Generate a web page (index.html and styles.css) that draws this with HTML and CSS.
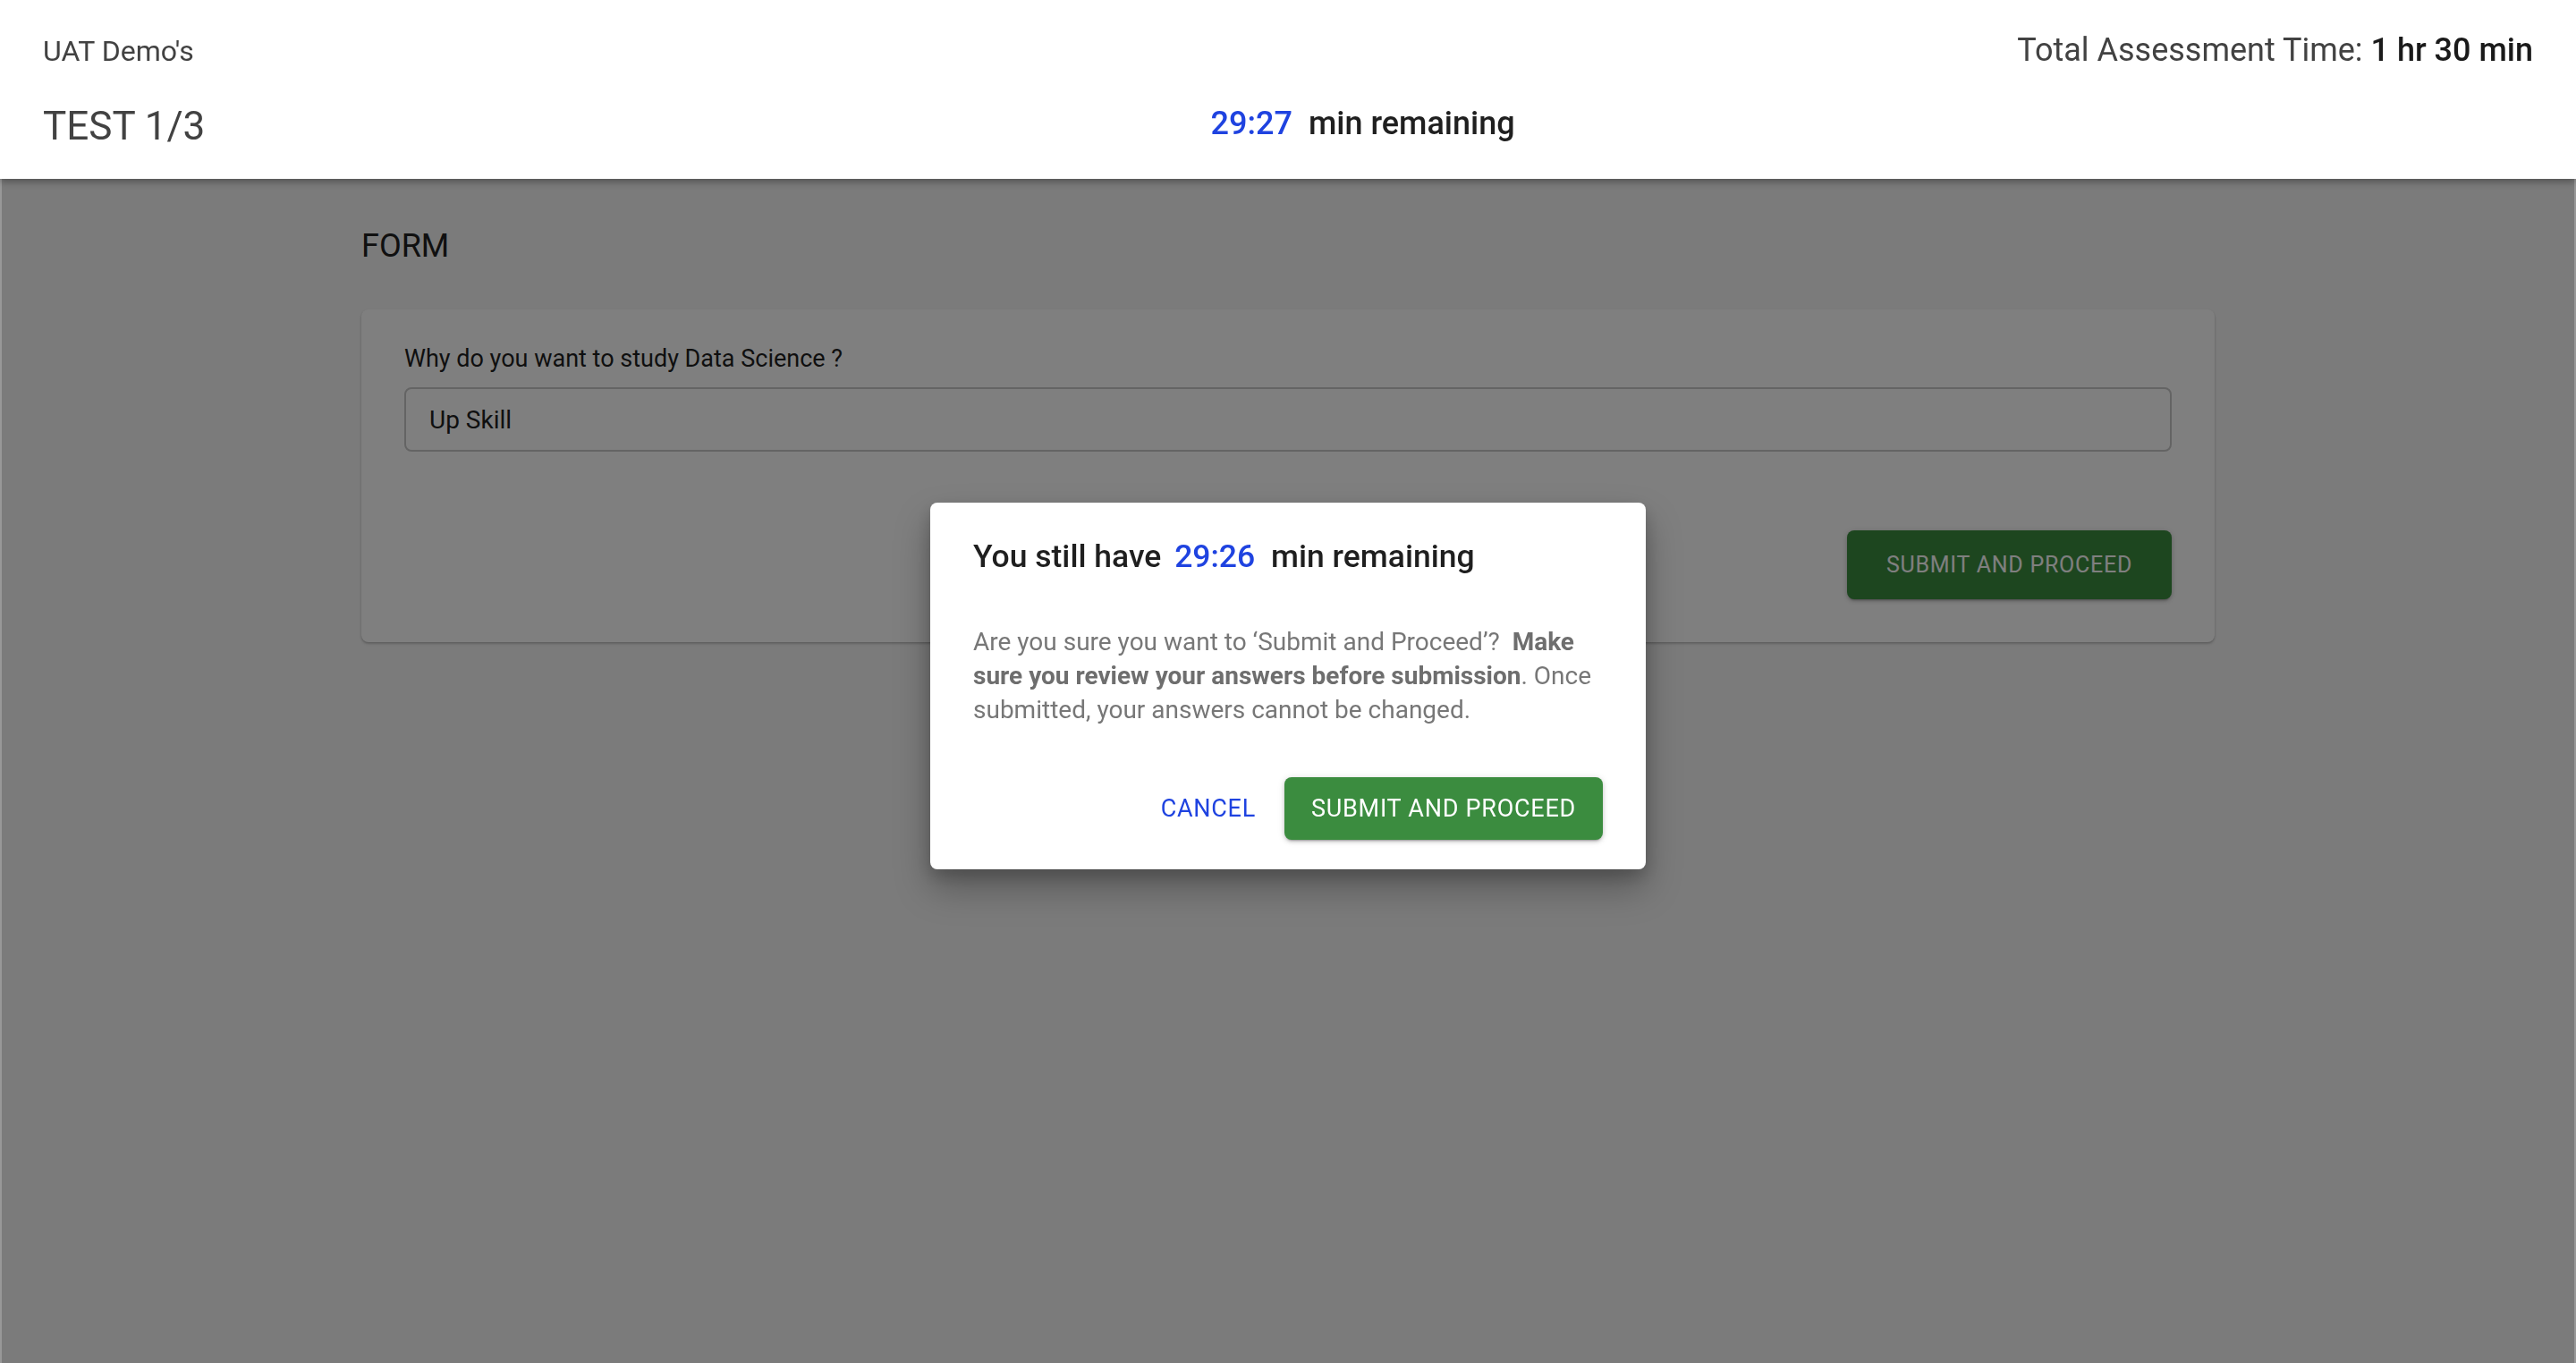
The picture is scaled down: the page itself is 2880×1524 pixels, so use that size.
FILE: index.html
```html
<!DOCTYPE html>
<html lang="en">
<head>
<meta charset="utf-8">
<title>UAT Demo's - Test 1/3</title>
<link rel="stylesheet" href="styles.css">
</head>
<body>
<header class="topbar">
  <div class="topbar-row row-one">
    <span class="org-name">UAT Demo's</span>
    <span class="total-time">Total Assessment Time: <span class="total-value">1 hr 30 min</span></span>
  </div>
  <div class="topbar-row row-two">
    <span class="test-name">TEST 1/3</span>
    <span class="timer"><span class="timer-value">29:27</span> min remaining</span>
    <span class="spacer"></span>
  </div>
</header>

<main class="content">
  <h2 class="section-title">FORM</h2>
  <section class="form-card">
    <label class="question-label" for="answer">Why do you want to study Data Science ?</label>
    <div class="answer-box" id="answer">Up Skill</div>
    <div class="card-actions">
      <button class="btn btn-primary btn-card" type="button">SUBMIT AND PROCEED</button>
    </div>
  </section>
</main>

<div class="backdrop"></div>

<div class="dialog-layer">
  <div class="dialog" role="dialog">
    <h3 class="dialog-title">You still have <span class="timer-value dialog-timer">29:26</span> min remaining</h3>
    <p class="dialog-text">Are you sure you want to ‘Submit and Proceed’?&nbsp; <strong>Make sure you review your answers before submission</strong>. Once submitted, your answers cannot be changed.</p>
    <div class="dialog-actions">
      <button class="btn btn-text" type="button">CANCEL</button>
      <button class="btn btn-primary btn-dialog" type="button">SUBMIT AND PROCEED</button>
    </div>
  </div>
</div>
</body>
</html>
```

FILE: styles.css
```css
* {
  box-sizing: border-box;
}

html, body {
  margin: 0;
  padding: 0;
}

body {
  font-family: Roboto, "Liberation Sans", Arial, sans-serif;
  background: #f6f6f6;
  color: #212121;
  min-height: 1524px;
}

/* ---------- header ---------- */
.topbar {
  position: relative;
  z-index: 30;
  height: 200px;
  background: #ffffff;
  padding: 36px 48px 35px;
  display: flex;
  flex-direction: column;
  gap: 39px;
  box-shadow: 0 3px 8px rgba(0, 0, 0, 0.35);
}

.topbar-row {
  display: flex;
  align-items: center;
  justify-content: space-between;
}

.row-one {
  height: 40px;
}

.row-two {
  height: 50px;
}

.org-name {
  font-size: 32px;
  color: #424242;
  line-height: 40px;
  margin-top: 2px;
}

.total-time {
  font-size: 36px;
  color: #424242;
  line-height: 40px;
}

.total-value {
  color: #1a1a1a;
  font-weight: 500;
}

.test-name {
  font-size: 44px;
  color: #424242;
  line-height: 50px;
  margin-top: 2px;
}

.timer {
  font-size: 36px;
  font-weight: 500;
  color: #1f1f1f;
  line-height: 50px;
  margin-top: -4px;
  margin-right: 14px;
}

.timer-value {
  color: #1f43e0;
  margin-right: 9px;
}

.spacer {
  width: 0;
}

/* ---------- main content ---------- */
.content {
  width: 2072px;
  margin: 0 auto;
  padding-top: 54px;
}

.section-title {
  margin: 0 0 50px;
  font-size: 36px;
  font-weight: 400;
  line-height: 42px;
  color: #212121;
}

.form-card {
  background: #ffffff;
  border-radius: 8px;
  padding: 40px 48px 48px;
  box-shadow: 0 2px 3px rgba(0, 0, 0, 0.18), 0 1px 2px rgba(0, 0, 0, 0.1);
}

.question-label {
  display: block;
  font-size: 27px;
  line-height: 31px;
  color: #1f1f1f;
  margin-bottom: 16px;
}

.answer-box {
  height: 72px;
  border: 2px solid #c8c8c8;
  border-radius: 8px;
  padding: 0 26px;
  display: flex;
  align-items: center;
  font-size: 28px;
  color: #212121;
}

.card-actions {
  display: flex;
  justify-content: flex-end;
  margin-top: 88px;
}

/* ---------- buttons ---------- */
.btn {
  font-family: Roboto, "Liberation Sans", Arial, sans-serif;
  border: none;
  background: none;
  cursor: pointer;
  letter-spacing: 0.74px;
  text-transform: uppercase;
}

.btn-primary {
  background: #3b8c3f;
  color: #ffffff;
  border-radius: 8px;
  box-shadow: 0 3px 2px -2px rgba(0, 0, 0, 0.25), 0 2px 4px rgba(0, 0, 0, 0.16), 0 1px 8px rgba(0, 0, 0, 0.12);
}

.btn-card {
  width: 363px;
  height: 77px;
  font-size: 25px;
}

.btn-dialog {
  width: 356px;
  height: 70px;
  font-size: 27px;
}

.btn-text {
  color: #1f43e0;
  font-size: 27px;
  padding: 0 16px;
  height: 70px;
  margin-right: 16px;
}

/* ---------- overlay + dialog ---------- */
.backdrop {
  position: fixed;
  inset: 0;
  z-index: 20;
  background: rgba(0, 0, 0, 0.5);
  border-left: 2px solid rgba(255, 255, 255, 0.22);
  border-right: 2px solid rgba(255, 255, 255, 0.22);
}

.dialog-layer {
  position: fixed;
  inset: 0;
  z-index: 40;
  display: flex;
  justify-content: center;
  align-items: flex-start;
  padding-top: 562px;
}

.dialog {
  width: 800px;
  height: 410px;
  background: #ffffff;
  border-radius: 8px;
  padding: 39px 48px 33px;
  display: flex;
  flex-direction: column;
  box-shadow: 0 21px 40px rgba(0, 0, 0, 0.28), 0 8px 18px rgba(0, 0, 0, 0.18);
}

.dialog-title {
  margin: 0;
  font-size: 35.5px;
  font-weight: 500;
  line-height: 42px;
  color: #1f1f1f;
}

.dialog-timer {
  margin-left: 6px;
}

.dialog-text {
  margin: 56px 0 0;
  font-size: 28px;
  line-height: 38px;
  color: #777777;
}

.dialog-text strong {
  font-weight: 700;
  color: #6e6e6e;
}

.dialog-actions {
  margin-top: auto;
  display: flex;
  justify-content: flex-end;
  align-items: center;
}
```
